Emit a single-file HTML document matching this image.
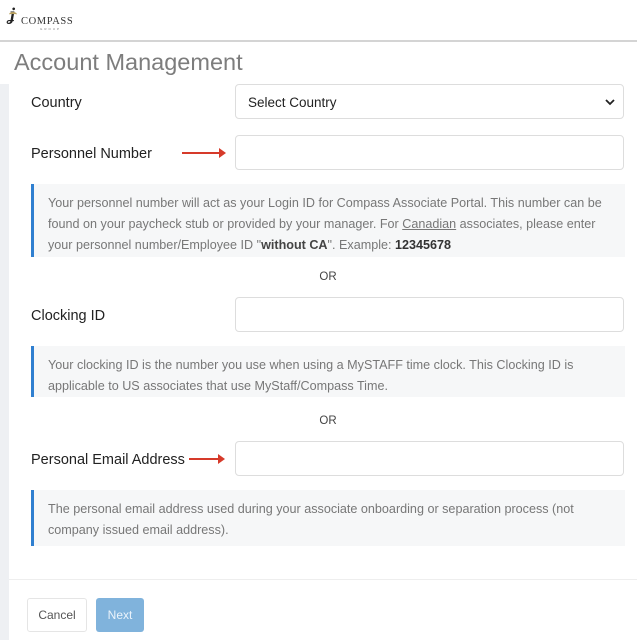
<!DOCTYPE html>
<html><head><style>
body{margin:0;width:637px;height:640px;overflow:hidden;background:#fff;font-family:"Liberation Sans",sans-serif;position:relative}
.a{position:absolute}
.lbl{font-size:14.5px;color:#222}
.inp{position:absolute;left:235px;width:389px;height:35px;border:1px solid #ddd;border-radius:4px;background:#fff;box-sizing:border-box}
.info{position:absolute;left:31px;width:594px;background:#f6f7f8;border-left:3px solid #2f7fd0;box-sizing:border-box;padding:9px 14px;font-size:12.6px;line-height:21px;color:#777}
.or{position:absolute;left:0;width:656px;text-align:center;font-size:11.5px;color:#444}
.arr{position:absolute;height:2px;background:#d63a2a}
.arr:after{content:"";position:absolute;right:-6px;top:-4px;border-left:7px solid #d63a2a;border-top:5px solid transparent;border-bottom:5px solid transparent}
</style></head><body>
<div class="a" style="left:0;top:0;width:637px;height:40px;border-bottom:2px solid #d4d4d4"></div>
<div class="a" style="left:10px;top:4px;font-family:'Liberation Serif',serif;font-style:italic;font-weight:bold;font-size:18px;color:#222">ʝ</div>
<div class="a" style="left:9px;top:12px;width:8px;height:3px;border-top:2px solid #b8a060;border-radius:50%"></div>
<div class="a" style="left:21px;top:16px;font-family:'Liberation Serif',serif;font-size:10.5px;letter-spacing:0.6px;color:#333">COMPASS</div>
<div class="a" style="left:40px;top:27px;font-size:3px;color:#777;letter-spacing:2px">GROUP</div>
<div class="a" style="left:14px;top:49px;font-size:23.5px;color:#7d7d7d">Account Management</div>
<div class="a" style="left:0;top:84px;width:9px;height:556px;background:#eef0f3"></div>
<div class="a lbl" style="left:31px;top:95px">Country</div>
<div class="inp" style="top:84px;padding:10px 12px;font-size:13.5px;color:#222">Select Country<svg style="position:absolute;right:8px;top:13px" width="10" height="8" viewBox="0 0 10 8"><path d="M1 2l4 4 4-4" fill="none" stroke="#222" stroke-width="1.8"/></svg></div>
<div class="a lbl" style="left:31px;top:146px">Personnel Number</div>
<div class="arr" style="left:182px;top:152px;width:38px"></div>
<div class="inp" style="top:135px"></div>
<div class="info" style="top:184px;height:73px">Your personnel number will act as your Login ID for Compass Associate Portal. This number can be found on your paycheck stub or provided by your manager. For <u>Canadian</u> associates, please enter your personnel number/Employee ID "<b style="color:#444">without CA</b>". Example: <b style="color:#333">12345678</b></div>
<div class="or" style="top:271px">OR</div>
<div class="a lbl" style="left:31px;top:308px">Clocking ID</div>
<div class="inp" style="top:297px"></div>
<div class="info" style="top:346px;height:51px">Your clocking ID is the number you use when using a MySTAFF time clock. This Clocking ID is applicable to US associates that use MyStaff/Compass Time.</div>
<div class="or" style="top:415px">OR</div>
<div class="a lbl" style="left:31px;top:452px">Personal Email Address</div>
<div class="arr" style="left:189px;top:458px;width:30px"></div>
<div class="inp" style="top:441px"></div>
<div class="info" style="top:490px;height:56px;padding-top:9px">The personal email address used during your associate onboarding or separation process (not company issued email address).</div>
<div class="a" style="left:9px;top:579px;width:628px;height:1px;background:#eee"></div>
<div class="a" style="left:27px;top:598px;width:60px;height:34px;border:1px solid #e5e5e5;border-radius:3px;box-sizing:border-box;font-size:12px;color:#555;text-align:center;line-height:32px">Cancel</div>
<div class="a" style="left:96px;top:598px;width:48px;height:34px;background:#80b3dc;border-radius:3px;font-size:12px;color:#eaf3fb;text-align:center;line-height:34px">Next</div>
</body></html>
